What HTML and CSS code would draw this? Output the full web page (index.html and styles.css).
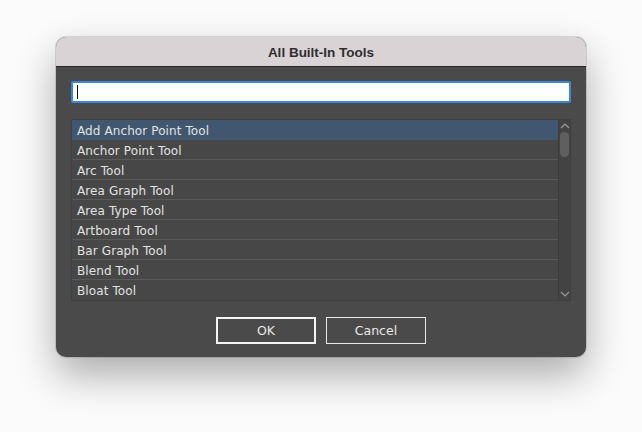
FILE: index.html
```html
<!DOCTYPE html>
<html>
<head>
<meta charset="utf-8">
<link rel="stylesheet" href="styles.css">
</head>
<body>
<div class="window">
  <div class="titlebar">All Built-In Tools</div>
  <div class="content">
    <div class="search"><span class="caret"></span></div>
    <div class="list">
      <div class="rows">
        <div class="row selected">Add Anchor Point Tool</div>
        <div class="row">Anchor Point Tool</div>
        <div class="row">Arc Tool</div>
        <div class="row">Area Graph Tool</div>
        <div class="row">Area Type Tool</div>
        <div class="row">Artboard Tool</div>
        <div class="row">Bar Graph Tool</div>
        <div class="row">Blend Tool</div>
        <div class="row">Bloat Tool</div>
      </div>
      <div class="scrollbar">
        <svg class="arrow" width="10" height="6" viewBox="0 0 10 6"><path d="M1 5 L5 1 L9 5" fill="none" stroke="#9a9a9a" stroke-width="1.2"/></svg>
        <div class="track"><div class="thumb"></div></div>
        <svg class="arrow" width="10" height="6" viewBox="0 0 10 6"><path d="M1 1 L5 5 L9 1" fill="none" stroke="#9a9a9a" stroke-width="1.2"/></svg>
      </div>
    </div>
    <div class="buttons">
      <div class="btn default">OK</div>
      <div class="btn">Cancel</div>
    </div>
  </div>
</div>
</body>
</html>
```
FILE: styles.css
```css
html, body {
  margin: 0;
  padding: 0;
  background: #fbfbfb;
  font-family: "DejaVu Sans", "Noto Sans", sans-serif;
}
body {
  width: 642px;
  height: 432px;
  display: flex;
  justify-content: center;
  align-items: flex-start;
  padding-top: 37px;
  box-sizing: border-box;
}
.window {
  width: 530px;
  height: 320px;
  border-radius: 10px;
  overflow: hidden;
  background: #4a4a4a;
  box-shadow: 0 0 0 1px rgba(0,0,0,0.12), 0 18px 40px rgba(0,0,0,0.32);
  display: flex;
  flex-direction: column;
}
.titlebar {
  height: 28px;
  flex: none;
  background: #d9d3d6;
  border-bottom: 1px solid #262626;
  display: flex;
  align-items: center;
  justify-content: center;
  font-family: "Liberation Sans", "Noto Sans", sans-serif;
  font-weight: bold;
  font-size: 13.5px;
  color: #2e2e2e;
  padding-top: 1px;
  box-sizing: content-box;
}
.content {
  flex: 1;
  padding: 14px 15px 14px 15px;
  display: flex;
  flex-direction: column;
}
.search {
  height: 18px;
  background: #ffffff;
  border: 2px solid #3b86d8;
  border-radius: 2px;
  display: flex;
  align-items: center;
  padding-left: 4px;
}
.caret {
  width: 1px;
  height: 14px;
  background: #111;
}
.list {
  margin-top: 16px;
  height: 180px;
  display: flex;
  border: 1px solid #3f3f3f;
  background: #474747;
}
.rows {
  flex: 1;
  display: flex;
  flex-direction: column;
}
.row {
  height: 19px;
  box-sizing: content-box;
  border-bottom: 1px solid #5a5a5a;
  padding-left: 5px;
  font-size: 12px;
  line-height: 22px;
  overflow: hidden;
  color: #e2e2e2;
  letter-spacing: 0.1px;
}
.row:last-child {
  border-bottom: none;
}
.row.selected {
  background: #415770;
  border-bottom-color: #415770;
}
.scrollbar {
  width: 11px;
  background: #434343;
  border-left: 1px solid #3c3c3c;
  display: flex;
  flex-direction: column;
  align-items: center;
}
.arrow {
  flex: none;
  margin: 3px 0;
}
.track {
  flex: 1;
  width: 100%;
  display: flex;
  justify-content: center;
}
.thumb {
  width: 9px;
  height: 25px;
  border-radius: 5px;
  background: #5f5f5f;
}
.buttons {
  margin-top: 16px;
  display: flex;
  justify-content: center;
  gap: 10px;
}
.btn {
  width: 98px;
  height: 25px;
  border: 1px solid #e8e8e8;
  display: flex;
  align-items: center;
  justify-content: center;
  font-size: 12.5px;
  color: #e8e8e8;
}
.btn.default {
  border: 2px solid #f4f4f4;
  width: 96px;
  height: 23px;
}
```
